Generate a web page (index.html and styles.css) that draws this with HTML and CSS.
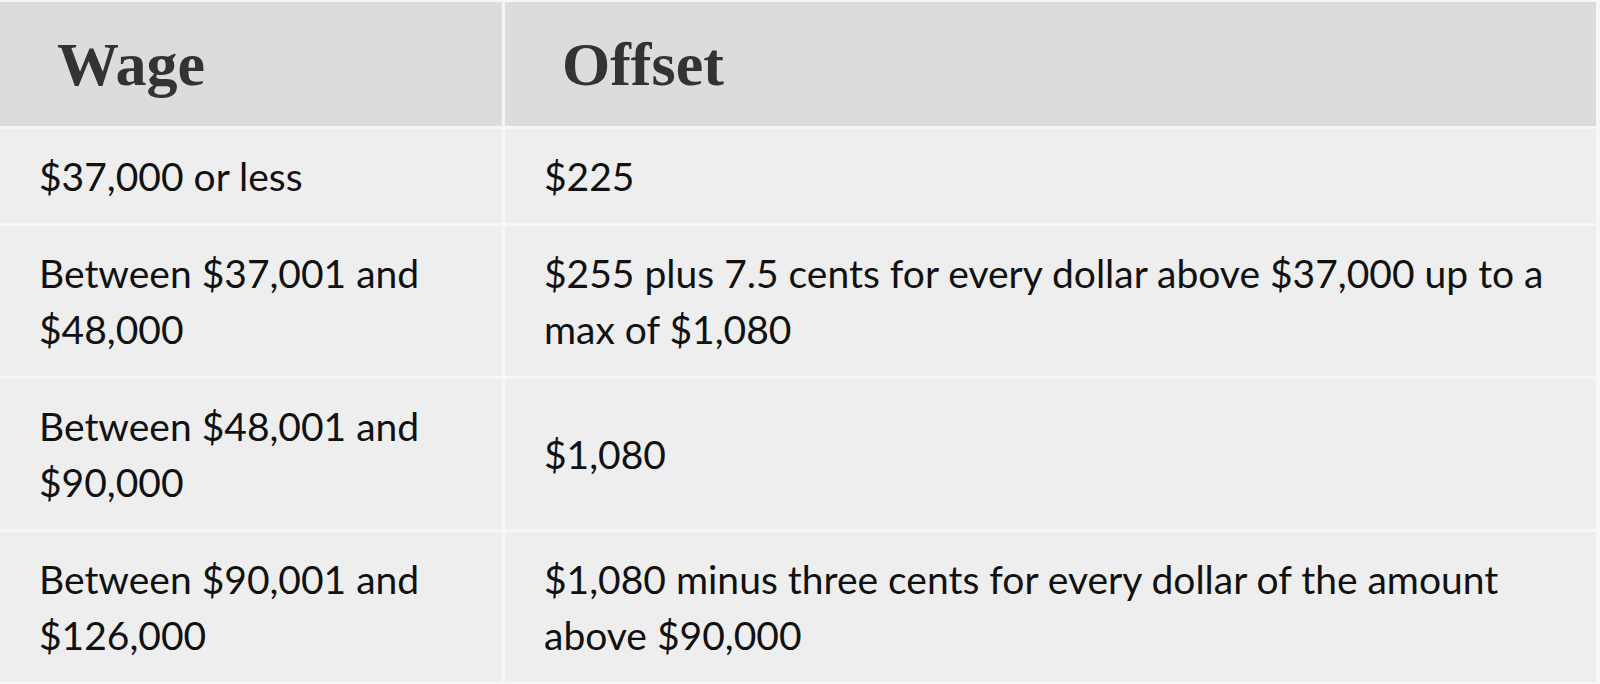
FILE: index.html
```html
<!DOCTYPE html>
<html lang="en">
<head>
<meta charset="utf-8">
<title>Wage offset table</title>
<link rel="stylesheet" href="styles.css">
</head>
<body>
<div class="table" role="table">
  <div class="cell head" role="columnheader">Wage</div>
  <div class="cell head" role="columnheader">Offset</div>

  <div class="cell" role="cell">$37,000 or less</div>
  <div class="cell" role="cell">$225</div>

  <div class="cell" role="cell">Between $37,001 and $48,000</div>
  <div class="cell" role="cell">$255 plus 7.5 cents for every dollar above $37,000 up to a max of $1,080</div>

  <div class="cell" role="cell">Between $48,001 and $90,000</div>
  <div class="cell" role="cell">$1,080</div>

  <div class="cell" role="cell">Between $90,001 and $126,000</div>
  <div class="cell" role="cell">$1,080 minus three cents for every dollar of the amount above $90,000</div>
</div>
</body>
</html>
```

FILE: styles.css
```css
html, body {
  margin: 0;
  padding: 0;
  background: #f7f7f7;
}

body {
  padding-top: 2px;
}

.table {
  width: 1596px;
  display: grid;
  grid-template-columns: 502px 1fr;
  gap: 3px;
}

.cell {
  background: #eeeeee;
  color: #111111;
  font-family: "Lato", "Open Sans", sans-serif;
  font-size: 39px;
  line-height: 56px;
  padding: 19px 38px 19px 39px;
  display: flex;
  align-items: center;
}

.head {
  background: #dcdcdc;
  color: #333333;
  font-family: "Liberation Serif", "Times New Roman", serif;
  font-weight: bold;
  font-size: 62px;
  line-height: 72px;
  padding: 26px 56px 26px 57px;
}
```
